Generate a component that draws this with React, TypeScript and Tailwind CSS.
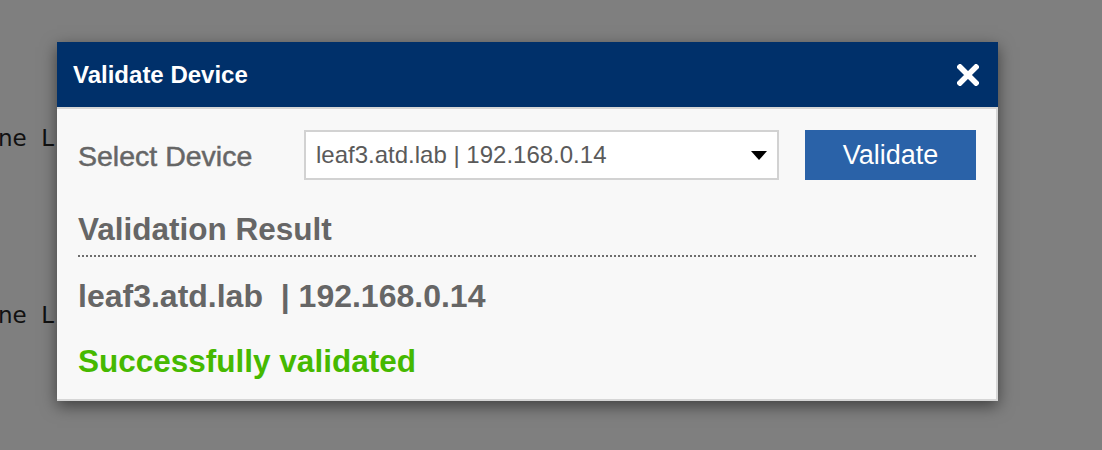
import React from 'react';

function CloseIcon() {
  return (
    <svg width="22" height="22" viewBox="0 0 22 22" aria-hidden="true">
      <path d="M3 3 L19 19 M19 3 L3 19" stroke="#ffffff" strokeWidth="5.5" strokeLinecap="square" />
    </svg>
  );
}

export default function App() {
  return (
    <div className="relative w-[1102px] h-[450px] overflow-hidden bg-[#7f7f7f] font-['Liberation_Sans',Arial,sans-serif]">
      {/* page behind the backdrop */}
      <div className="flex flex-col pt-[122px] gap-[145px] font-['DejaVu_Sans',sans-serif] text-[23px] leading-[32px] text-[#111]">
        <div className="whitespace-pre -ml-[2px]">ne  L</div>
        <div className="whitespace-pre -ml-[2px]">ne  L</div>
      </div>

      {/* modal */}
      <div className="absolute left-[57px] top-[42px] w-[941px] shadow-[0_5px_15px_rgba(0,0,0,0.5)]">
        <div className="h-[65px] bg-[#00306a] flex items-center justify-between pl-[16px] pr-[19px]">
          <span className="text-white font-bold text-[24px] leading-none">Validate Device</span>
          <CloseIcon />
        </div>
        <div className="bg-[#f8f8f8] border-t-2 border-r-2 border-b-2 border-[#d6d6d6] pl-[21px] pr-[20px] pt-[21px] pb-[20px]">
          <div className="flex items-center h-[50px]">
            <label className="w-[226px] text-[28.5px] leading-none text-[#666666] pt-[2px] [-webkit-text-stroke:0.5px_#666666]">Select Device</label>
            <div className="w-[475px] h-[50px] bg-white border-2 border-[#d2d2d2] flex items-center justify-between pl-[10px] pr-[10px]">
              <span className="text-[24px] leading-none text-[#5a5a5a]">leaf3.atd.lab | 192.168.0.14</span>
              <svg width="16" height="9" viewBox="0 0 16 9" aria-hidden="true">
                <path d="M0 0 H16 L8 9 Z" fill="#000000" />
              </svg>
            </div>
            <button className="ml-[26px] w-[171px] h-[50px] bg-[#2a62a8] text-white text-[27px] leading-none">
              Validate
            </button>
          </div>

          <div className="mt-[31px] text-[31.5px] leading-[36px] font-bold text-[#666666]">Validation Result</div>
          <div className="mt-[8px] border-t-2 border-dotted border-[#6e6e6e]"></div>
          <div className="mt-[21px] text-[32px] leading-[36px] font-bold text-[#666666] whitespace-pre">leaf3.atd.lab  | 192.168.0.14</div>
          <div className="mt-[29px] text-[31.5px] leading-[36px] font-bold text-[#46b900]">Successfully validated</div>
        </div>
      </div>
    </div>
  );
}
